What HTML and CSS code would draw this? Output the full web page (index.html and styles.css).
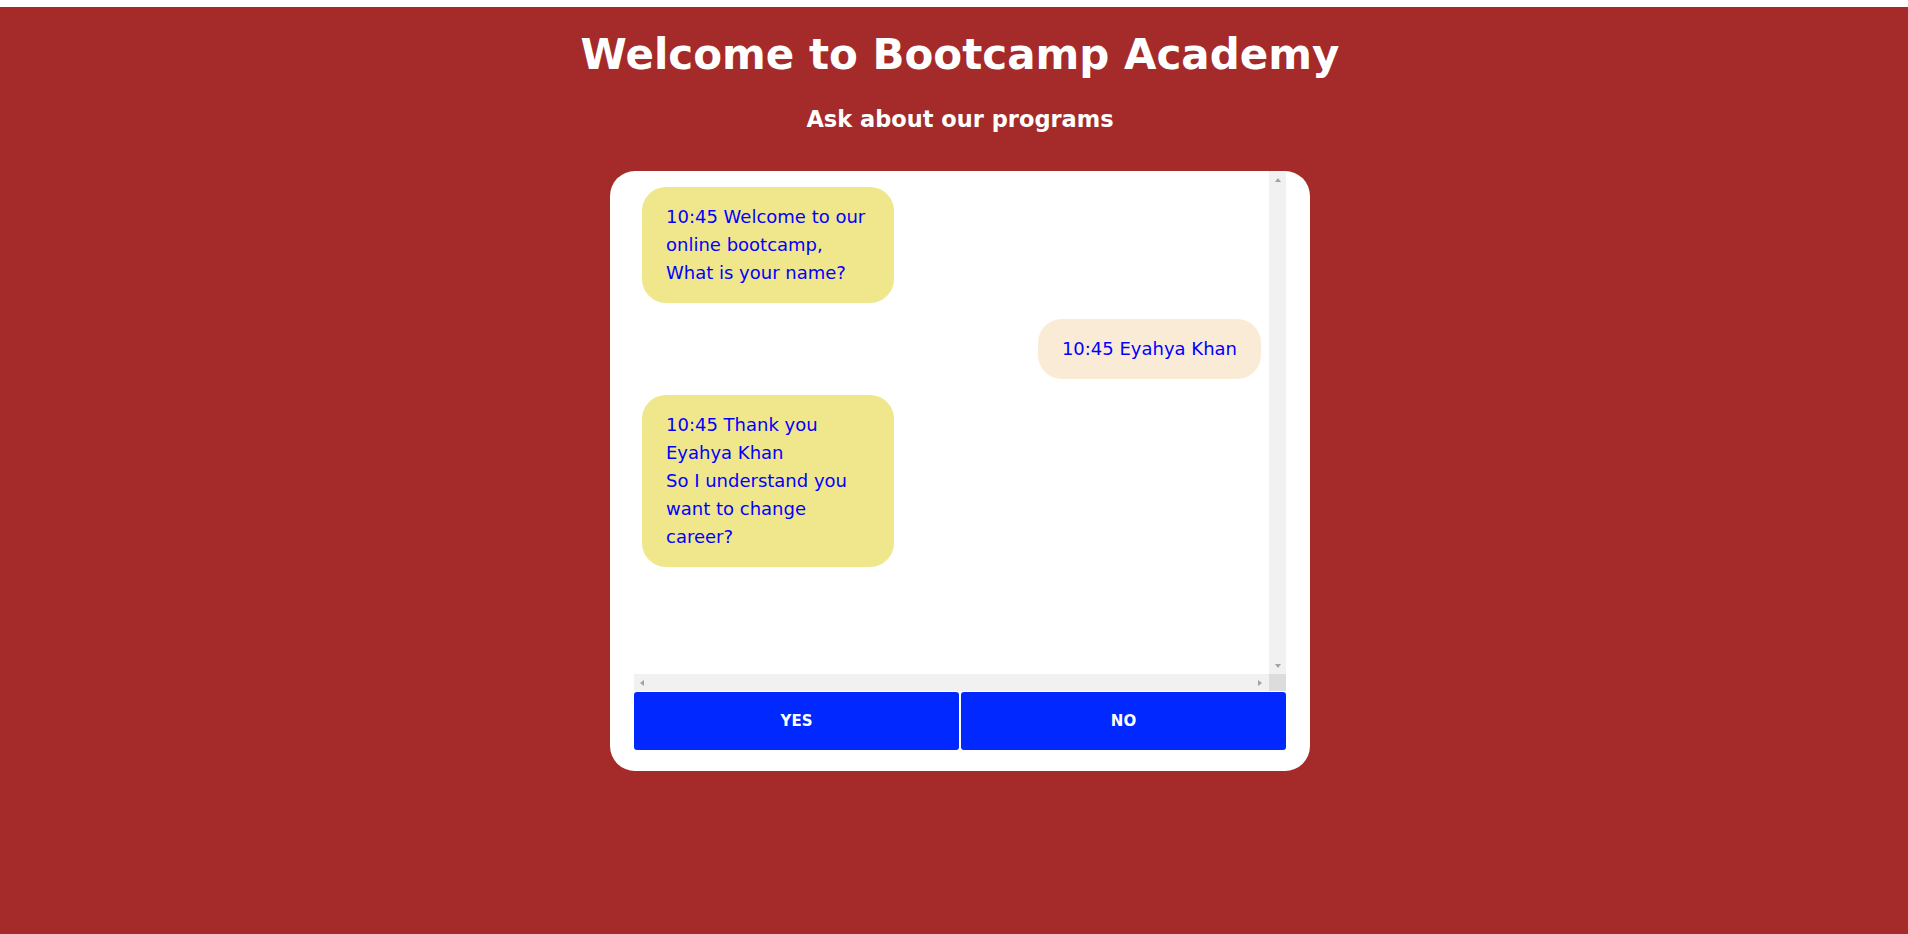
FILE: index.html
```html
<!DOCTYPE html>
<html lang="en">
<head>
    <meta charset="UTF-8">
    <title>Bootcamp Academy</title>
    <link rel="stylesheet" href="styles.css">
</head>
<body>
<div class="page">
    <h1 class="title">Welcome to Bootcamp Academy</h1>
    <h2 class="subtitle">Ask about our programs</h2>

    <div class="chat">
        <div class="viewport">
            <div class="messages">
                <div class="msg bot">10:45 Welcome to our online bootcamp,<br>What is your name?</div>
                <div class="msg user">10:45 Eyahya Khan</div>
                <div class="msg bot">10:45 Thank you Eyahya Khan<br>So I understand you want to change career?</div>
            </div>
            <div class="vbar">
                <span class="arrow up"></span>
                <span class="arrow down"></span>
            </div>
            <div class="hbar">
                <span class="arrow left"></span>
                <span class="arrow right"></span>
            </div>
            <div class="corner"></div>
        </div>
        <div class="answers">
            <button class="answer">YES</button>
            <button class="answer">NO</button>
        </div>
    </div>
</div>
</body>
</html>
```

FILE: styles.css
```css
* {
    box-sizing: border-box;
}

body {
    margin: 0;
    background: #fff;
    font-family: "DejaVu Sans", sans-serif;
}

.page {
    margin-top: 7px;
    min-height: calc(100vh - 7px);
    background: #a52a2a;
    padding: 22px 0 0 12px;
    color: #fff;
}

.title {
    margin: 0;
    text-align: center;
    font-size: 42px;
    line-height: 52px;
    font-weight: bold;
}

.subtitle {
    margin: 24px 0 0;
    text-align: center;
    font-size: 22.5px;
    line-height: 28px;
    font-weight: bold;
}

.chat {
    width: 700px;
    margin: 38px auto 0;
    padding: 0 24px 21px;
    background: #fff;
    border-radius: 25px;
}

/* chat window with its (always visible) scrollbars */
.viewport {
    display: grid;
    grid-template-columns: 1fr 17px;
    grid-template-rows: 503px 17px;
}

.messages {
    overflow: hidden;
    display: flex;
    flex-direction: column;
    gap: 16px;
    padding: 16px 8px;
}

.vbar,
.hbar {
    display: flex;
    justify-content: space-between;
    align-items: center;
    background: #f1f1f1;
}

.vbar {
    flex-direction: column;
    padding: 7px 0 6px;
}

.hbar {
    padding: 0 7px 0 6px;
}

.corner {
    background: #dcdcdc;
}

.arrow {
    width: 0;
    height: 0;
    border: 4px solid transparent;
}

.arrow.up {
    border-top: none;
    border-bottom-color: #a3a3a3;
    border-left-width: 3.5px;
    border-right-width: 3.5px;
}

.arrow.down {
    border-bottom: none;
    border-top-color: #a3a3a3;
    border-left-width: 3.5px;
    border-right-width: 3.5px;
}

.arrow.left {
    border-left: none;
    border-right-color: #a3a3a3;
    border-top-width: 3.5px;
    border-bottom-width: 3.5px;
}

.arrow.right {
    border-right: none;
    border-left-color: #a3a3a3;
    border-top-width: 3.5px;
    border-bottom-width: 3.5px;
}

.msg {
    max-width: 252px;
    padding: 16px 24px;
    border-radius: 24px;
    font-size: 18px;
    line-height: 28px;
    color: #0000ff;
}

.bot {
    align-self: flex-start;
    background: #f0e68c;
}

.user {
    align-self: flex-end;
    background: #faebd7;
}

.answers {
    display: flex;
    gap: 2px;
    margin-top: 1px;
}

.answer {
    flex: 1;
    height: 58px;
    border: none;
    border-radius: 3px;
    background: #0028ff;
    color: #fff;
    font-family: "DejaVu Sans", sans-serif;
    font-weight: bold;
    font-size: 15px;
    cursor: pointer;
}
```
